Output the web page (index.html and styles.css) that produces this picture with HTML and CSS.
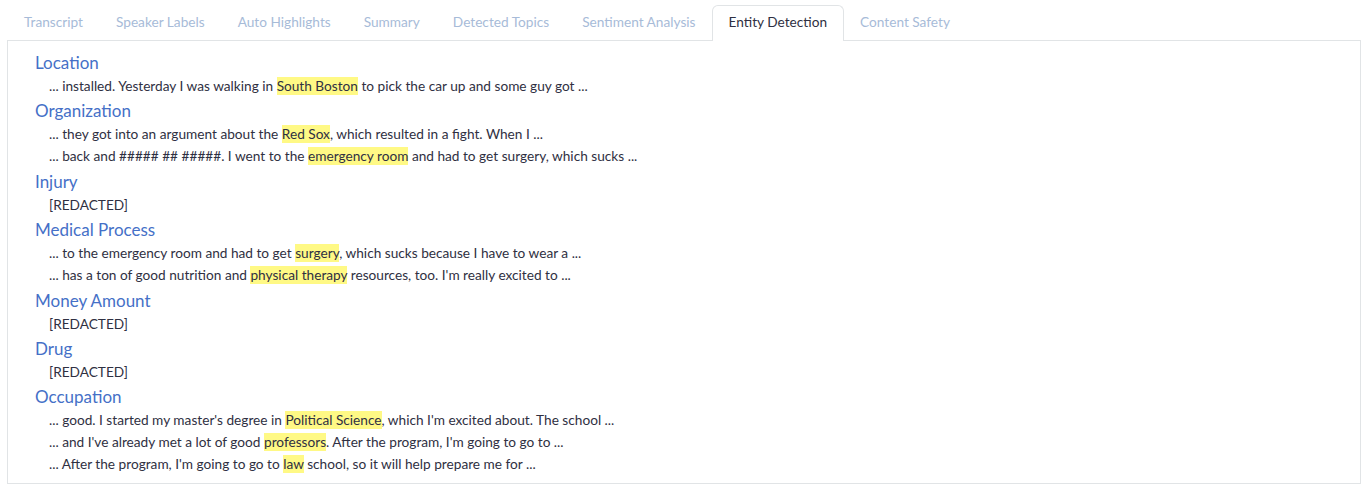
FILE: index.html
```html
<!DOCTYPE html>
<html lang="en">
<head>
<meta charset="utf-8">
<title>Entity Detection</title>
<link rel="stylesheet" href="styles.css">
</head>
<body>
<div class="page">
  <ul class="tabs">
    <li class="tab">Transcript</li>
    <li class="tab">Speaker Labels</li>
    <li class="tab">Auto Highlights</li>
    <li class="tab">Summary</li>
    <li class="tab">Detected Topics</li>
    <li class="tab">Sentiment Analysis</li>
    <li class="tab active">Entity Detection</li>
    <li class="tab">Content Safety</li>
  </ul>
  <div class="panel">
    <section class="group">
      <h3 class="label">Location</h3>
      <p class="item">... installed. Yesterday I was walking in <mark class="hl">South Boston</mark> to pick the car up and some guy got ...</p>
    </section>
    <section class="group">
      <h3 class="label">Organization</h3>
      <p class="item">... they got into an argument about the <mark class="hl">Red Sox</mark>, which resulted in a fight. When I ...</p>
      <p class="item">... back and ##### ## #####. I went to the <mark class="hl">emergency room</mark> and had to get surgery, which sucks ...</p>
    </section>
    <section class="group">
      <h3 class="label">Injury</h3>
      <p class="item">[REDACTED]</p>
    </section>
    <section class="group">
      <h3 class="label">Medical Process</h3>
      <p class="item">... to the emergency room and had to get <mark class="hl">surgery</mark>, which sucks because I have to wear a ...</p>
      <p class="item">... has a ton of good nutrition and <mark class="hl">physical therapy</mark> resources, too. I'm really excited to ...</p>
    </section>
    <section class="group">
      <h3 class="label">Money Amount</h3>
      <p class="item">[REDACTED]</p>
    </section>
    <section class="group">
      <h3 class="label">Drug</h3>
      <p class="item">[REDACTED]</p>
    </section>
    <section class="group">
      <h3 class="label">Occupation</h3>
      <p class="item">... good. I started my master's degree in <mark class="hl">Political Science</mark>, which I'm excited about. The school ...</p>
      <p class="item">... and I've already met a lot of good <mark class="hl">professors</mark>. After the program, I'm going to go to ...</p>
      <p class="item">... After the program, I'm going to go to <mark class="hl">law</mark> school, so it will help prepare me for ...</p>
    </section>
  </div>
</div>
</body>
</html>
```

FILE: styles.css
```css
* { box-sizing: border-box; }
html, body { margin: 0; padding: 0; background: #fff; }
body {
  font-family: Lato, "Open Sans", "Liberation Sans", sans-serif;
  font-size: 13.67px;
  color: #2f3042;
}
.page {
  padding: 5px 11px 8px 7px;
}
.tabs {
  list-style: none;
  margin: 0;
  padding: 0;
  display: flex;
  height: 35px;
}
.tab {
  padding: 0 15.5px;
  border: 1px solid transparent;
  border-bottom: none;
  border-radius: 6px 6px 0 0;
  line-height: 33px;
  color: #a7bbd8;
  white-space: nowrap;
}
.tab:first-child { padding-left: 16px; }
.tab.active {
  color: #2f3042;
  border-color: #e1e4e6;
  background: #fff;
  position: relative;
  height: 36px;
  z-index: 1;
}
.panel {
  border: 1px solid #e1e4e6;
  padding: 10px 20px 8px 27px;
}
.group + .group { margin-top: 2.4px; }
.label {
  margin: 0;
  font-weight: 400;
  font-size: 17px;
  line-height: 24px;
  color: #4570c7;
}
.item {
  margin: 0;
  padding-left: 14px;
  line-height: 22px;
}
.hl {
  background: #fff985;
  color: inherit;
  padding: 1px 0;
}
```
